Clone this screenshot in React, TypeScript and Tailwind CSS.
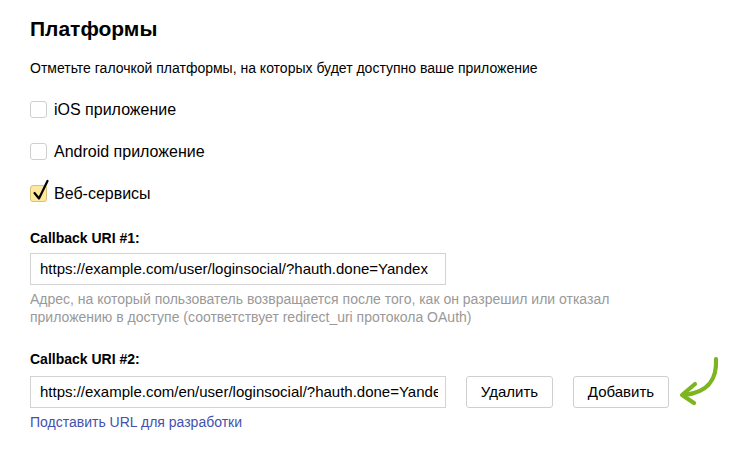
import React from "react";

function Checkbox({ checked }: { checked?: boolean }) {
  if (checked) {
    return (
      <span className="relative inline-block w-[17px] h-[17px] rounded-[3px] border border-[#d8c27a] bg-[#ffe79e] shrink-0">
        <svg className="absolute left-[1px] top-[-7px]" width="18" height="23" viewBox="0 0 18 23">
          <path d="M2.5 14 L7 19.5 L15.5 2" fill="none" stroke="#000" strokeWidth="2.2" strokeLinecap="round" strokeLinejoin="round" />
        </svg>
      </span>
    );
  }
  return <span className="inline-block w-[17px] h-[17px] rounded-[3px] border border-[#cfcfcf] bg-white shrink-0" />;
}

export default function App() {
  return (
    <div className="w-[750px] h-[452px] bg-white text-black overflow-hidden" style={{ fontFamily: '"Liberation Sans", Arial, sans-serif' }}>
      <div className="pl-[30px] pt-[15px] flex flex-col">
        <h1 className="text-[21px] leading-[28px] font-bold">Платформы</h1>
        <p className="mt-[15px] text-[14px] leading-[20px]">Отметьте галочкой платформы, на которых будет доступно ваше приложение</p>
        <div className="mt-[23px] flex flex-col gap-[25px]">
          <label className="flex items-center gap-[7px] h-[17px] text-[16px]">
            <Checkbox />
            <span>iOS приложение</span>
          </label>
          <label className="flex items-center gap-[7px] h-[17px] text-[16px]">
            <Checkbox />
            <span>Android приложение</span>
          </label>
          <label className="flex items-center gap-[7px] h-[17px] text-[16px]">
            <Checkbox checked />
            <span>Веб-сервисы</span>
          </label>
        </div>
        <div className="mt-[26px] text-[14px] leading-[20px] font-bold">Callback URI #1:</div>
        <div className="mt-[5px] w-[416px] h-[32px] border border-[#d3d3d3] flex items-center pl-[9px] pr-[7px] text-[15px]">
          <div className="overflow-hidden whitespace-nowrap">https://example.com/user/loginsocial/?hauth.done=Yandex</div>
        </div>
        <p className="mt-[5px] text-[14px] leading-[18px] text-[#999]">
          Адрес, на который пользователь возвращается после того, как он разрешил или отказал
          <br />
          приложению в доступе (соответствует redirect_uri протокола OAuth)
        </p>
        <div className="mt-[23px] text-[14px] leading-[20px] font-bold">Callback URI #2:</div>
        <div className="relative mt-[7px] flex items-center">
          <div className="w-[416px] h-[32px] border border-[#d3d3d3] flex items-center pl-[9px] pr-[7px] text-[15px]">
            <div className="overflow-hidden whitespace-nowrap">https://example.com/en/user/loginsocial/?hauth.done=Yandex</div>
          </div>
          <button className="ml-[20px] w-[87px] h-[32px] border border-[#cfcfcf] rounded-[3px] bg-white text-[15px]">Удалить</button>
          <button className="ml-[20px] w-[96px] h-[32px] border border-[#cfcfcf] rounded-[3px] bg-white text-[15px]">Добавить</button>
          <svg className="absolute left-[642px] top-[-24px]" width="56" height="56" viewBox="0 0 56 56">
            <path d="M44 7 C45 26 38 40 12 43" fill="none" stroke="#7cb51f" strokeWidth="4.2" strokeLinecap="round" />
            <path d="M23 32 L10 43 L22 51" fill="none" stroke="#7cb51f" strokeWidth="4.2" strokeLinecap="round" strokeLinejoin="round" />
          </svg>
        </div>
        <a className="mt-[5px] text-[14px] leading-[18px] text-[#4450b0]">Подставить URL для разработки</a>
      </div>
    </div>
  );
}
